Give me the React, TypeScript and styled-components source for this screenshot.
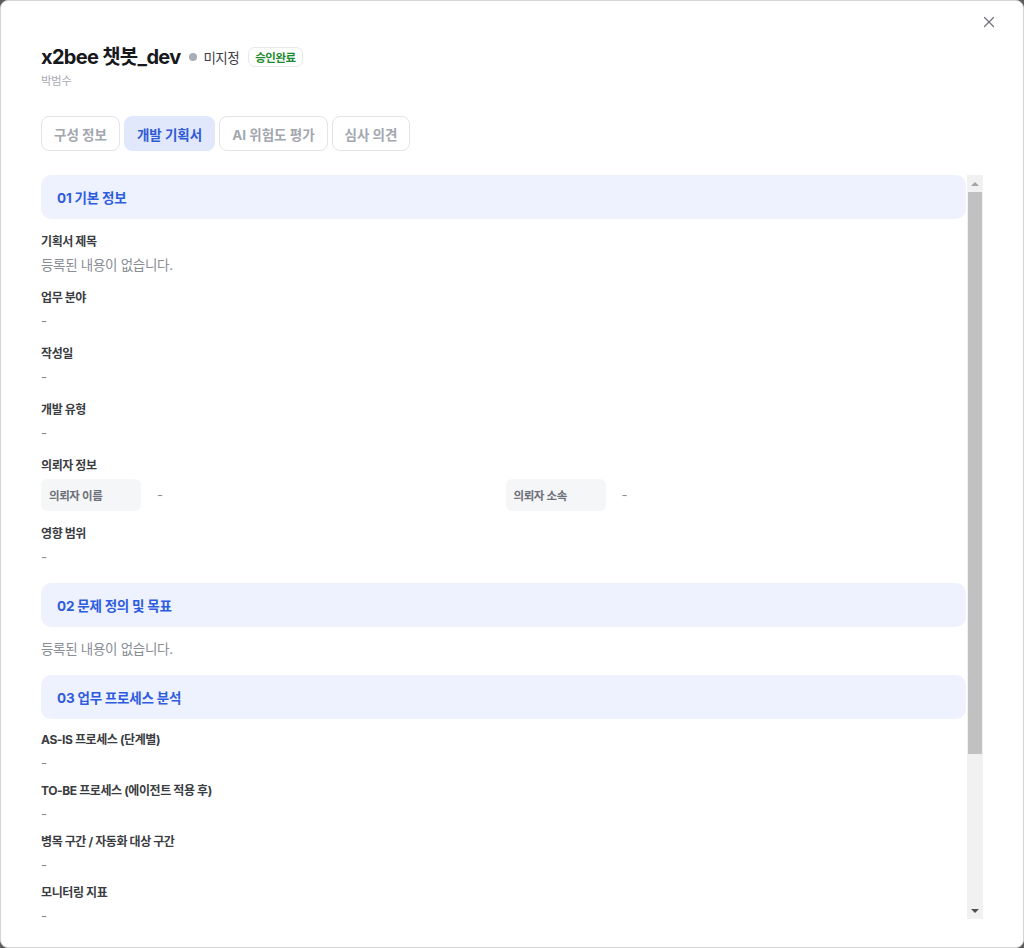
import styled, { createGlobalStyle } from "styled-components";
import { X } from "lucide-react";

const GlobalStyle = createGlobalStyle`
  html, body {
    margin: 0;
    padding: 0;
    background: #5c5c5c;
  }
  * {
    box-sizing: border-box;
  }
`;

const Modal = styled.div`
  position: relative;
  width: 1024px;
  height: 948px;
  background: #ffffff;
  border: 1px solid #d4d4d4;
  border-radius: 8px;
  padding: 42px 40px 28px 40px;
  display: flex;
  flex-direction: column;
  font-family: Inter, "Noto Sans CJK KR", sans-serif;
  color: #1f2024;
`;

const CloseButton = styled.button`
  position: absolute;
  top: 12px;
  right: 25px;
  width: 18px;
  height: 18px;
  padding: 0;
  border: none;
  background: none;
  color: #70747c;
  display: flex;
  align-items: center;
  justify-content: center;
`;

const TitleRow = styled.div`
  display: flex;
  align-items: center;
  height: 28px;
`;

const Title = styled.h1`
  margin: 0;
  font-size: 20px;
  font-weight: 700;
  letter-spacing: -0.7px;
  line-height: 28px;
  color: #17181c;
`;

const Status = styled.span`
  display: flex;
  align-items: center;
  gap: 6px;
  margin-left: 9px;
  font-size: 13.5px;
  letter-spacing: -0.5px;
  color: #3d4047;
`;

const Dot = styled.span`
  width: 8px;
  height: 8px;
  border-radius: 50%;
  background: #a9adb6;
`;

const Badge = styled.span`
  margin-left: 9px;
  height: 20px;
  padding: 0 6px;
  display: flex;
  align-items: center;
  border: 1px solid #e6e8ec;
  border-radius: 7px;
  font-size: 11.5px;
  font-weight: 600;
  letter-spacing: -0.5px;
  color: #1c8a2f;
`;

const Owner = styled.div`
  margin-top: 2px;
  font-size: 11.5px;
  line-height: 16px;
  letter-spacing: -0.5px;
  color: #a8abb2;
`;

const Tabs = styled.div`
  display: flex;
  gap: 4px;
  margin-top: 27px;
`;

const Tab = styled.button<{ $active?: boolean }>`
  height: 35px;
  padding: 0 12px;
  border-radius: 8px;
  border: 1px solid ${(p) => (p.$active ? "#e1e8fb" : "#e2e4e8")};
  background: ${(p) => (p.$active ? "#e1e8fb" : "#ffffff")};
  color: ${(p) => (p.$active ? "#2f5bd6" : "#a3a7af")};
  font-family: Inter, "Noto Sans CJK KR", sans-serif;
  font-size: 13.5px;
  font-weight: 700;
  letter-spacing: 0;
`;

const ScrollFrame = styled.div`
  flex: 1;
  min-height: 0;
  margin-top: 24px;
  display: flex;
  gap: 1px;
`;

const Content = styled.div`
  flex: 1;
  min-width: 0;
  overflow: hidden;
  display: flex;
  flex-direction: column;
  gap: 16px;
`;

const Scrollbar = styled.div`
  width: 16px;
  background: #f1f1f1;
  display: flex;
  flex-direction: column;
`;

const ArrowButton = styled.div<{ $dir: "up" | "down" }>`
  height: 17px;
  display: flex;
  align-items: center;
  justify-content: center;

  &::before {
    content: "";
    width: 0;
    height: 0;
    border-left: 4px solid transparent;
    border-right: 4px solid transparent;
    ${(p) =>
      p.$dir === "up"
        ? "border-bottom: 4px solid #a3a3a3;"
        : "border-top: 4px solid #505050;"}
  }
`;

const Thumb = styled.div<{ $size: number }>`
  height: ${(p) => p.$size}px;
  margin: 0 1px;
  background: #c1c1c1;
`;

const Track = styled.div`
  flex: 1;
`;

const Section = styled.section``;

const SectionHeader = styled.div`
  height: 44px;
  flex-shrink: 0;
  padding: 0 16px;
  display: flex;
  align-items: center;
  background: #eef1fe;
  border-radius: 10px;
  font-size: 13.5px;
  font-weight: 700;
  letter-spacing: -0.2px;
  color: #2d5ce0;
`;

const SectionBody = styled.div<{ $top: number; $gap: number }>`
  display: flex;
  flex-direction: column;
  padding-top: ${(p) => p.$top}px;
  gap: ${(p) => p.$gap}px;
`;

const Field = styled.div`
  display: flex;
  flex-direction: column;
  gap: 4px;
`;

const Label = styled.div`
  font-size: 12px;
  font-weight: 700;
  line-height: 18px;
  letter-spacing: -0.4px;
  color: #3a3c41;
`;

const Value = styled.div`
  font-size: 13.5px;
  line-height: 20px;
  letter-spacing: -0.3px;
  color: #8a8d94;
`;

const PairGrid = styled.div`
  display: grid;
  grid-template-columns: 1fr 1fr;
  gap: 4px;
`;

const Pair = styled.div`
  display: flex;
  align-items: center;
  gap: 16px;
`;

const PairKey = styled.div`
  width: 100px;
  height: 32px;
  padding: 0 8px;
  display: flex;
  align-items: center;
  background: #f5f6f8;
  border-radius: 6px;
  font-size: 11.5px;
  font-weight: 600;
  letter-spacing: -0.4px;
  color: #6d7078;
`;

const PairValue = styled.div`
  font-size: 13px;
  color: #8a8d94;
`;

const EMPTY = "등록된 내용이 없습니다.";

const basicFields = [
  { label: "기획서 제목", value: EMPTY },
  { label: "업무 분야", value: "-" },
  { label: "작성일", value: "-" },
  { label: "개발 유형", value: "-" },
];

const processFields = [
  "AS-IS 프로세스 (단계별)",
  "TO-BE 프로세스 (에이전트 적용 후)",
  "병목 구간 / 자동화 대상 구간",
  "모니터링 지표",
];

function App() {
  return (
    <>
      <GlobalStyle />
      <Modal>
        <CloseButton>
          <X size={18} strokeWidth={1.6} />
        </CloseButton>
        <TitleRow>
          <Title>x2bee 챗봇_dev</Title>
          <Status>
            <Dot />
            미지정
          </Status>
          <Badge>승인완료</Badge>
        </TitleRow>
        <Owner>박범수</Owner>
        <Tabs>
          <Tab>구성 정보</Tab>
          <Tab $active>개발 기획서</Tab>
          <Tab>AI 위험도 평가</Tab>
          <Tab>심사 의견</Tab>
        </Tabs>
        <ScrollFrame>
          <Content>
            <Section>
              <SectionHeader>01 기본 정보</SectionHeader>
              <SectionBody $top={14} $gap={14}>
                {basicFields.map((f) => (
                  <Field key={f.label}>
                    <Label>{f.label}</Label>
                    <Value>{f.value}</Value>
                  </Field>
                ))}
                <Field>
                  <Label>의뢰자 정보</Label>
                  <PairGrid>
                    <Pair>
                      <PairKey>의뢰자 이름</PairKey>
                      <PairValue>-</PairValue>
                    </Pair>
                    <Pair>
                      <PairKey>의뢰자 소속</PairKey>
                      <PairValue>-</PairValue>
                    </Pair>
                  </PairGrid>
                </Field>
                <Field>
                  <Label>영향 범위</Label>
                  <Value>-</Value>
                </Field>
              </SectionBody>
            </Section>
            <Section>
              <SectionHeader>02 문제 정의 및 목표</SectionHeader>
              <SectionBody $top={12} $gap={0}>
                <Value>{EMPTY}</Value>
              </SectionBody>
            </Section>
            <Section>
              <SectionHeader>03 업무 프로세스 분석</SectionHeader>
              <SectionBody $top={12} $gap={9}>
                {processFields.map((label) => (
                  <Field key={label}>
                    <Label>{label}</Label>
                    <Value>-</Value>
                  </Field>
                ))}
              </SectionBody>
            </Section>
          </Content>
          <Scrollbar>
            <ArrowButton $dir="up" />
            <Thumb $size={562} />
            <Track />
            <ArrowButton $dir="down" />
          </Scrollbar>
        </ScrollFrame>
      </Modal>
    </>
  );
}

export default App;
